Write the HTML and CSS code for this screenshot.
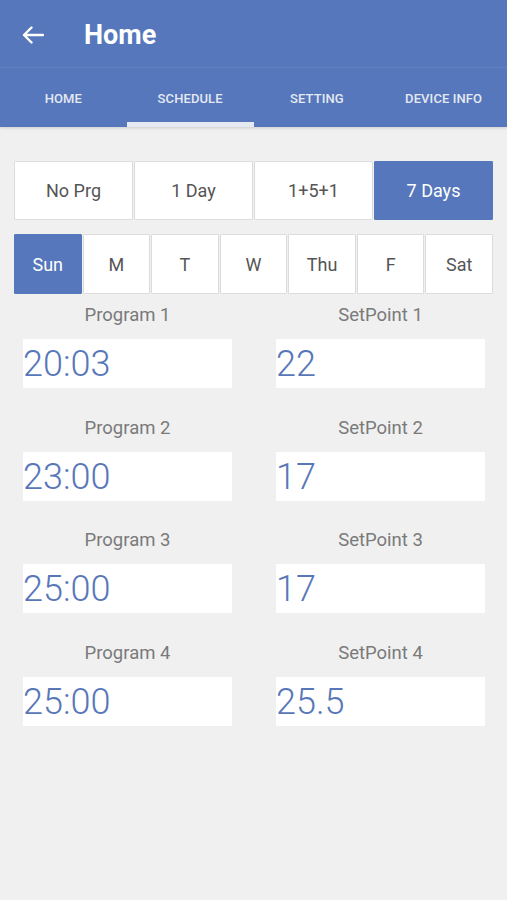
FILE: index.html
```html
<!DOCTYPE html>
<html>
<head>
<meta charset="utf-8">
<link rel="stylesheet" href="styles.css">
</head>
<body>
<header class="appbar">
  <div class="titlebar">
    <svg class="back" width="22" height="18" viewBox="0 0 22 18"><path d="M2 9H21M9.5 1.5L2 9l7.5 7.5" fill="none" stroke="#fff" stroke-width="2.4" stroke-linecap="round" stroke-linejoin="round"/></svg>
    <h1 class="title">Home</h1>
  </div>
  <nav class="tabs">
    <div class="tab">HOME</div>
    <div class="tab active">SCHEDULE</div>
    <div class="tab">SETTING</div>
    <div class="tab">DEVICE INFO</div>
  </nav>
</header>
<main class="content">
  <div class="segments">
    <div class="seg">No Prg</div>
    <div class="seg">1 Day</div>
    <div class="seg">1+5+1</div>
    <div class="seg sel">7 Days</div>
  </div>
  <div class="days">
    <div class="seg sel">Sun</div>
    <div class="seg">M</div>
    <div class="seg">T</div>
    <div class="seg">W</div>
    <div class="seg">Thu</div>
    <div class="seg">F</div>
    <div class="seg">Sat</div>
  </div>
  <div class="grid">
    <div class="field"><div class="label">Program 1</div><div class="box">20:03</div></div>
    <div class="field"><div class="label">SetPoint 1</div><div class="box">22</div></div>
    <div class="field"><div class="label">Program 2</div><div class="box">23:00</div></div>
    <div class="field"><div class="label">SetPoint 2</div><div class="box">17</div></div>
    <div class="field"><div class="label">Program 3</div><div class="box">25:00</div></div>
    <div class="field"><div class="label">SetPoint 3</div><div class="box">17</div></div>
    <div class="field"><div class="label">Program 4</div><div class="box">25:00</div></div>
    <div class="field"><div class="label">SetPoint 4</div><div class="box">25.5</div></div>
  </div>
</main>
</body>
</html>
```
FILE: styles.css
```css
* { box-sizing: border-box; }
html, body { margin: 0; padding: 0; }
body {
  width: 507px;
  height: 900px;
  background: #f0f0f0;
  font-family: Roboto, "Noto Sans", sans-serif;
  overflow: hidden;
}
.appbar {
  background: #5677bb;
  box-shadow: 0 1px 3px rgba(0,0,0,0.15);
}
.titlebar {
  height: 68px;
  display: flex;
  align-items: center;
  padding-left: 22px;
  padding-top: 2px;
  border-bottom: 1px solid rgba(255,255,255,0.08);
}
.back { display: block; }
.title {
  margin: 0 0 0 40px;
  color: #fff;
  font-size: 27px;
  font-weight: 700;
  line-height: 30px;
}
.tabs {
  display: flex;
  height: 59px;
}
.tab {
  flex: 1;
  display: flex;
  align-items: center;
  justify-content: center;
  color: #e4e9f4;
  font-size: 13px;
  font-weight: 500;
  letter-spacing: 0.1px;
  border-bottom: 5px solid transparent;
  padding-top: 6px;
}
.tab.active { border-bottom-color: #e6e9f2; }
.content { padding-top: 34px; }
.segments, .days {
  display: flex;
  gap: 1px;
  margin: 0 14px;
}
.segments { height: 59px; }
.days { height: 60px; margin-top: 14px; }
.seg {
  flex: 1;
  background: #fff;
  border: 1px solid #dcdcdc;
  display: flex;
  align-items: center;
  justify-content: center;
  color: #555;
  font-size: 18px;
  border-radius: 1px;
}
.seg.sel {
  background: #5677bb;
  border-color: #5677bb;
  color: #fff;
}
.grid {
  display: grid;
  grid-template-columns: 209px 209px;
  column-gap: 44px;
  row-gap: 27.7px;
  padding: 9px 22px 0 23px;
}
.label {
  text-align: center;
  color: #7a7a7a;
  font-size: 18.5px;
  line-height: 24px;
  margin-bottom: 12px;
}
.box {
  height: 49px;
  background: #fff;
  color: #5877b9;
  font-size: 36px;
  font-weight: 300;
  line-height: 51px;
  padding-left: 0;
}
```
